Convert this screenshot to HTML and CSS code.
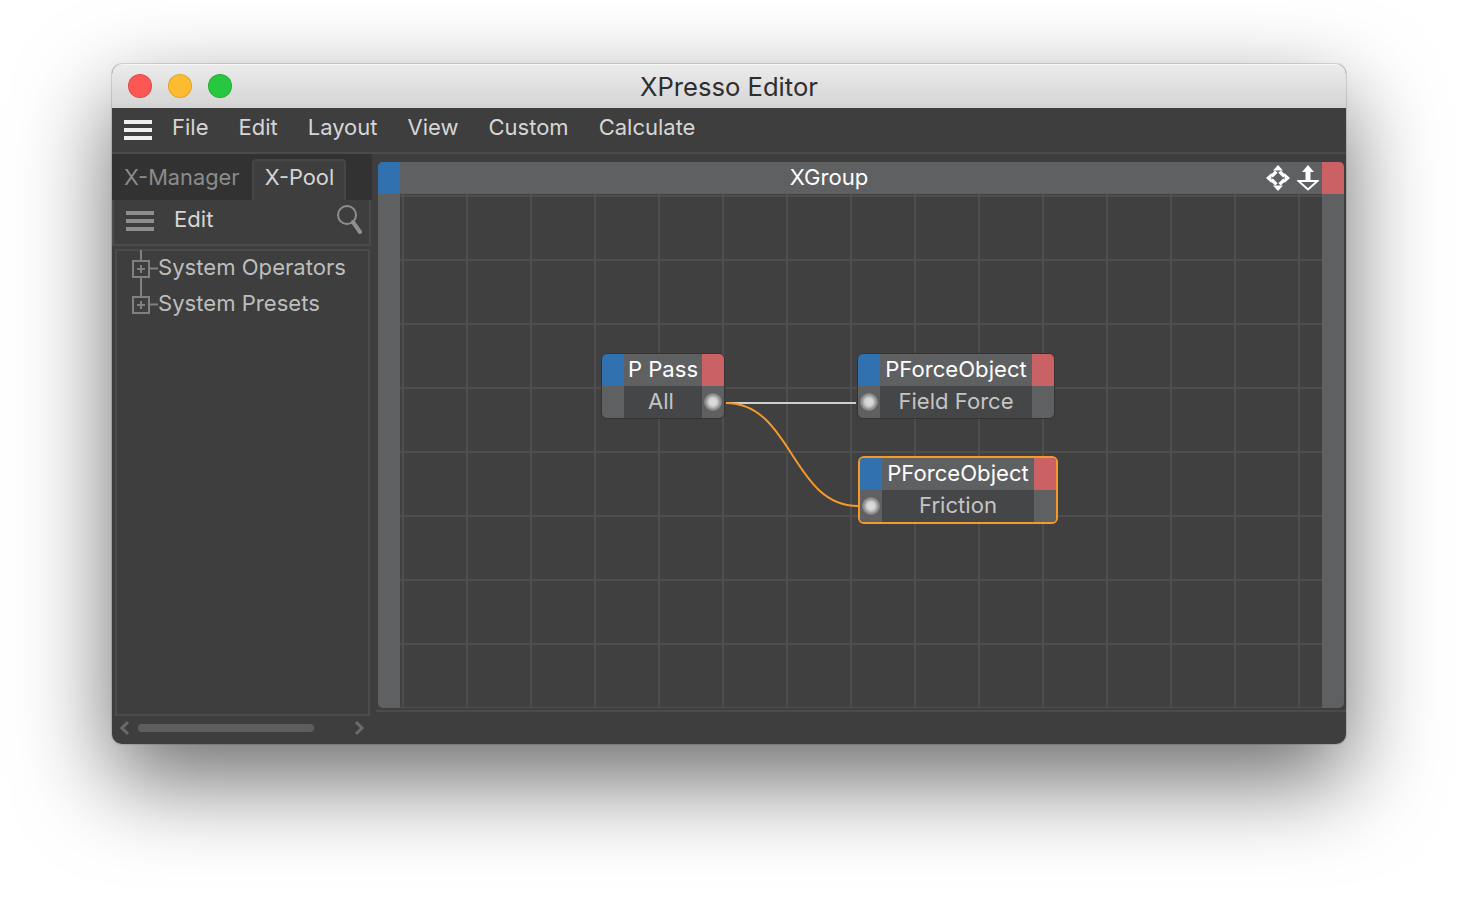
FILE: index.html
```html
<!DOCTYPE html>
<html lang="en">
<head>
    <meta charset="UTF-8">
    <meta name="viewport" content="width=device-width, initial-scale=1.0">
    <title>XPresso Editor</title>
    <link rel="stylesheet" href="styles.css">
</head>
<body>
    <div class="window">
        <div class="titlebar">
            <div class="lights">
                <span class="light red"></span>
                <span class="light yellow"></span>
                <span class="light green"></span>
            </div>
            <span class="title">XPresso Editor</span>
        </div>

        <div class="menubar">
            <span class="burger"><i></i><i></i><i></i></span>
            <span>File</span>
            <span>Edit</span>
            <span>Layout</span>
            <span>View</span>
            <span>Custom</span>
            <span>Calculate</span>
        </div>

        <div class="main">
            <div class="side">
                <div class="tabs">
                    <span class="tab">X-Manager</span>
                    <span class="tab active">X-Pool</span>
                </div>
                <div class="toolbar">
                    <span class="burger dim"><i></i><i></i><i></i></span>
                    <span class="toolbar-label">Edit</span>
                    <svg class="search" width="26" height="32" viewBox="0 0 26 32">
                        <circle cx="11" cy="11" r="9" fill="none" stroke="#8f8f8f" stroke-width="2"/>
                        <path d="M17 18 L24 28" stroke="#8f8f8f" stroke-width="4" stroke-linecap="round"/>
                    </svg>
                </div>
                <div class="tree">
                    <div class="tree-row first">
                        <svg class="twig" width="28" height="36" viewBox="0 0 28 36">
                            <path d="M11 0 V10 M11 27 V36 M20 18.5 H28" stroke="#808080" stroke-width="2" fill="none"/>
                            <rect x="3" y="11" width="16" height="16" fill="none" stroke="#808080" stroke-width="2"/>
                            <path d="M7 19 H15 M11 15 V23" stroke="#808080" stroke-width="2"/>
                        </svg>
                        <span>System Operators</span>
                    </div>
                    <div class="tree-row">
                        <svg class="twig" width="28" height="36" viewBox="0 0 28 36">
                            <path d="M11 0 V10 M20 18.5 H28" stroke="#808080" stroke-width="2" fill="none"/>
                            <rect x="3" y="11" width="16" height="16" fill="none" stroke="#808080" stroke-width="2"/>
                            <path d="M7 19 H15 M11 15 V23" stroke="#808080" stroke-width="2"/>
                        </svg>
                        <span>System Presets</span>
                    </div>
                </div>
                <div class="scrollbar">
                    <svg width="12" height="16" viewBox="0 0 12 16"><path d="M9 2 L3 8 L9 14" fill="none" stroke="#6a6a6a" stroke-width="3"/></svg>
                    <span class="thumb"></span>
                    <svg width="12" height="16" viewBox="0 0 12 16"><path d="M3 2 L9 8 L3 14" fill="none" stroke="#6a6a6a" stroke-width="3"/></svg>
                </div>
            </div>

            <div class="editor">
                <div class="group">
                    <div class="group-head">
                        <span class="blue"></span>
                        <div class="group-title">
                            <span>XGroup</span>
                            <div class="group-icons">
                                <svg width="24" height="26" viewBox="0 0 24 26">
                                    <path fill="#fff" d="M12 0 L17 5.5 H7 Z M12 26 L7 20.5 H17 Z M0 13 L5.5 8 V18 Z M24 13 L18.5 18 V8 Z"/>
                                    <path d="M6.8 10.2 L9.2 7.8 M14.8 7.8 L17.2 10.2 M6.8 15.8 L9.2 18.2 M14.8 18.2 L17.2 15.8" stroke="#fff" stroke-width="3.4" stroke-linecap="square"/>
                                </svg>
                                <svg width="22" height="26" viewBox="0 0 22 26">
                                    <path fill="#fff" d="M11 0 L17 7 H13.5 V15 H8.5 V7 H5 Z"/>
                                    <path d="M1.5 16 H20.5 L11 24.5 Z" fill="none" stroke="#fff" stroke-width="2"/>
                                </svg>
                            </div>
                        </div>
                        <span class="red"></span>
                    </div>
                    <div class="group-body">
                        <span class="rail"></span>
                        <div class="canvas">
                            <svg class="wires" width="922" height="514" viewBox="0 0 922 514">
                                <path d="M326 209 H456" stroke="#d0d0d0" stroke-width="2" fill="none"/>
                                <path d="M326 209 C392 209 392 312 458 312" stroke="#f39a2b" stroke-width="2" fill="none"/>
                            </svg>

                            <div class="node node-pass">
                                <span class="blue"></span>
                                <span class="node-title">P Pass</span>
                                <span class="red"></span>
                                <span class="node-side"></span>
                                <span class="node-label">All</span>
                                <span class="node-side"><i class="port"></i></span>
                            </div>

                            <div class="node node-field">
                                <span class="blue"></span>
                                <span class="node-title">PForceObject</span>
                                <span class="red"></span>
                                <span class="node-side"><i class="port"></i></span>
                                <span class="node-label">Field Force</span>
                                <span class="node-side"></span>
                            </div>

                            <div class="node node-friction selected">
                                <span class="blue"></span>
                                <span class="node-title">PForceObject</span>
                                <span class="red"></span>
                                <span class="node-side"><i class="port"></i></span>
                                <span class="node-label">Friction</span>
                                <span class="node-side"></span>
                            </div>
                        </div>
                        <span class="rail right"></span>
                    </div>
                </div>
                <div class="statusline"></div>
            </div>
        </div>
    </div>
</body>
</html>
```

FILE: styles.css
```css
body {
    margin: 0;
    height: 904px;
    background: #ffffff;
    overflow: hidden;
    font-family: 'Inter', 'Liberation Sans', sans-serif;
    font-size: 22.1px;
}
.window {
    width: 1234px;
    height: 680px;
    margin: 64px 0 0 112px;
    display: flex;
    flex-direction: column;
    background: #3e3e3e;
    border-radius: 10px;
    box-shadow: 0 36px 92px rgba(0, 0, 0, 0.58), 0 0 0 1px rgba(0, 0, 0, 0.12);
    overflow: hidden;
}
.titlebar {
    position: relative;
    height: 44px;
    flex: none;
    display: flex;
    align-items: center;
    justify-content: center;
    background: linear-gradient(#ececec, #d4d4d4);
    box-shadow: inset 0 1px 0 #f6f6f6;
}
.title {
    color: #2e2e2e;
    font-size: 25.6px;
}
.lights {
    position: absolute;
    left: 16px;
    top: 10px;
    display: flex;
    gap: 16px;
}
.light {
    width: 24px;
    height: 24px;
    border-radius: 50%;
    box-sizing: border-box;
    border: 1px solid rgba(0, 0, 0, 0.12);
}
.light.red {
    background: #fc5753;
}
.light.yellow {
    background: #fdbc30;
}
.light.green {
    background: #27c83f;
}
.menubar {
    height: 44px;
    flex: none;
    display: flex;
    align-items: center;
    gap: 30px;
    padding-left: 12px;
    color: #d6d6d6;
    font-size: 22px;
    border-bottom: 2px solid #4b4b4b;
}
.menubar > span:not(.burger) {
    margin-top: -7px;
}
.burger {
    width: 28px;
    display: flex;
    flex-direction: column;
    gap: 4px;
    margin-right: -10px;
}
.burger i {
    height: 4px;
    background: #efefef;
}
.burger.dim i {
    background: #8e8e8e;
}
.main {
    flex: 1;
    display: flex;
    min-height: 0;
}
.side {
    width: 260px;
    flex: none;
    display: flex;
    flex-direction: column;
}
.tabs {
    height: 46px;
    flex: none;
    display: flex;
    align-items: flex-end;
    background: #323232;
    padding-left: 12px;
    gap: 13px;
    font-size: 21.8px;
}
.tab {
    height: 41px;
    line-height: 36px;
    color: #8c8c8c;
}
.tab.active {
    width: 94px;
    box-sizing: border-box;
    text-align: center;
    line-height: 32px;
    color: #d6d6d6;
    background: #3e3e3e;
    border: 2px solid #454545;
    border-bottom: none;
    border-radius: 4px 4px 0 0;
}
.toolbar {
    height: 46px;
    flex: none;
    box-sizing: border-box;
    display: flex;
    align-items: center;
    margin-right: 1px;
    padding-left: 12px;
    padding-bottom: 8px;
    border: 2px solid #4b4b4b;
    border-top: none;
    color: #d6d6d6;
}
.toolbar-label {
    margin-left: 30px;
    margin-top: 2px;
}
.toolbar .burger {
    margin-top: 6px;
}
.search {
    margin-left: auto;
    margin-right: 7px;
    margin-top: 4px;
}
.tree {
    flex: 1;
    margin: 3px 2px 0 3px;
    border: 2px solid #4b4b4b;
    color: #bdbdbd;
    padding-left: 13px;
}
.tree-row {
    height: 36px;
    display: flex;
    align-items: center;
}
.tree-row span {
    margin-top: -2px;
}
.tree-row.first {
    margin-top: -1px;
}
.twig {
    flex: none;
}
.scrollbar {
    height: 28px;
    flex: none;
    box-sizing: border-box;
    display: flex;
    align-items: center;
    padding: 0 7px 4px 7px;
    gap: 7px;
}
.scrollbar svg {
    flex: none;
}
.thumb {
    width: 176px;
    height: 8px;
    flex: none;
    border-radius: 4px;
    background: #5e5e5e;
    margin-right: 32px;
}
.editor {
    flex: 1;
    display: flex;
    flex-direction: column;
    padding: 8px 0 0 4px;
}
.group {
    height: 546px;
    margin: 0 2px;
    flex: none;
    display: flex;
    flex-direction: column;
    border-radius: 5px;
    overflow: hidden;
    background: #5f6062;
}
.group-head {
    height: 32px;
    flex: none;
    display: flex;
}
.blue {
    background: #3271b0;
}
.red {
    background: #ca6265;
}
.group-head .blue,
.group-head .red {
    width: 22px;
    flex: none;
}
.group-title {
    flex: 1;
    position: relative;
    box-sizing: border-box;
    padding-right: 64px;
    text-align: center;
    line-height: 30px;
    color: #ffffff;
}
.group-icons {
    position: absolute;
    right: 3px;
    top: 3px;
    display: flex;
    gap: 7px;
}
.group-body {
    flex: 1;
    display: flex;
    min-height: 0;
}
.rail {
    width: 22px;
    flex: none;
}
.canvas {
    flex: 1;
    position: relative;
    background-color: #404040;
    background-image:
        linear-gradient(to right, #4e4e4e 2px, transparent 2px),
        linear-gradient(to bottom, #4e4e4e 2px, transparent 2px);
    background-size: 64px 64px;
    background-position: 2px 1px;
}
.statusline {
    border-top: 2px solid #4b4b4b;
    margin-top: 2px;
}
.wires {
    position: absolute;
    left: 0;
    top: 0;
}
.node {
    position: absolute;
    display: grid;
    grid-template-columns: 22px 1fr 22px;
    grid-template-rows: 32px 32px;
    border: 1px solid #333333;
    border-radius: 6px;
    overflow: hidden;
    background: #454647;
    text-align: center;
    white-space: nowrap;
}
.node.selected {
    border: 2px solid #f39a2b;
}
.node-pass {
    left: 201px;
    top: 159px;
    width: 122px;
}
.node-pass .node-label {
    padding-right: 4px;
}
.node-field {
    left: 457px;
    top: 159px;
    width: 196px;
}
.node-friction {
    left: 458px;
    top: 262px;
    width: 196px;
}
.node-title {
    background: #5f6062;
    color: #ffffff;
    line-height: 30px;
}
.node-label {
    color: #c4c4c4;
    line-height: 30px;
}
.node-side {
    background: #5f6062;
    display: flex;
    align-items: center;
    justify-content: center;
}
.port {
    width: 18px;
    height: 18px;
    border-radius: 50%;
    background: radial-gradient(circle, #dedede 0, #d4d4d4 4px, #969696 7px, #7c7c7c 9px);
}
```
